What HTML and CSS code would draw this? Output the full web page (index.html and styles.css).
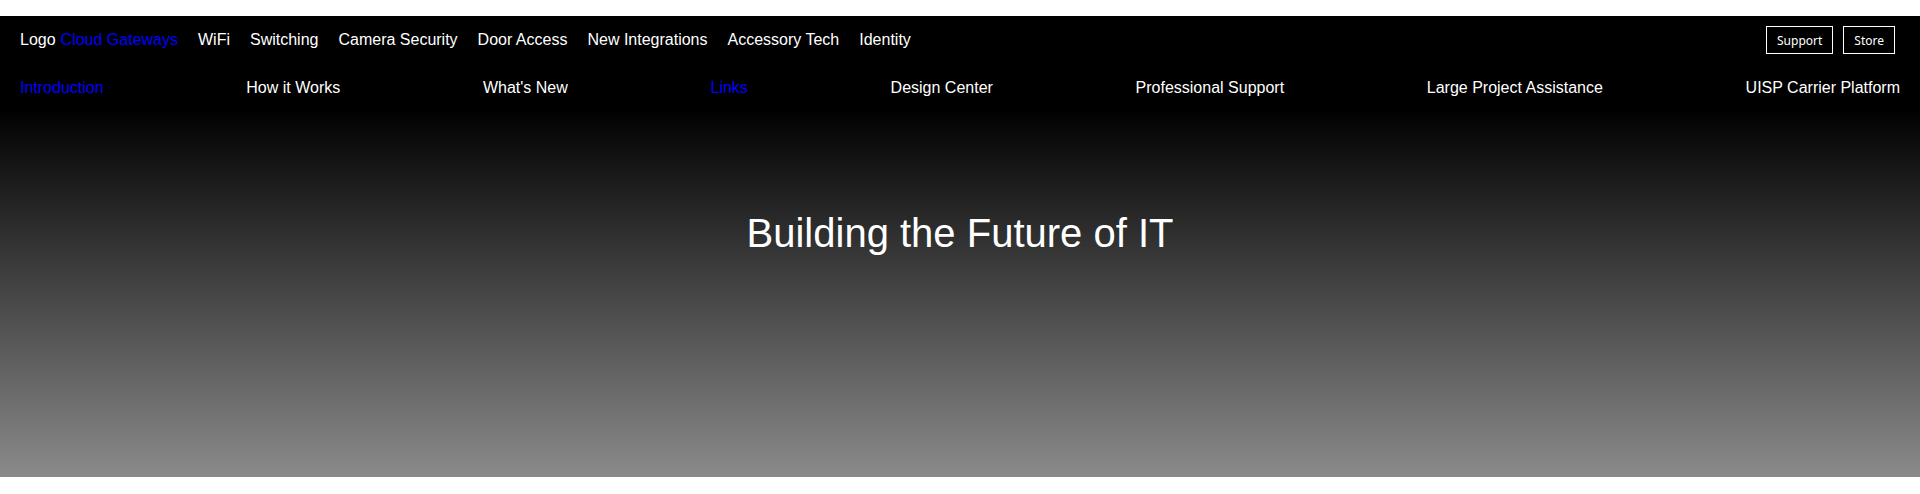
FILE: index.html
```html
<!DOCTYPE html>
<html lang="en">
<head>
<meta charset="utf-8">
<title>Building the Future of IT</title>
<link rel="stylesheet" href="styles.css">
</head>
<body>
<div class="page">
  <header class="site-header">
    <div class="top-row">
      <div class="brand">
        <span class="logo">Logo</span>
        <nav class="main-nav">
          <a class="nav-link active" href="#">Cloud Gateways</a>
          <a class="nav-link" href="#">WiFi</a>
          <a class="nav-link" href="#">Switching</a>
          <a class="nav-link" href="#">Camera Security</a>
          <a class="nav-link" href="#">Door Access</a>
          <a class="nav-link" href="#">New Integrations</a>
          <a class="nav-link" href="#">Accessory Tech</a>
          <a class="nav-link" href="#">Identity</a>
        </nav>
      </div>
      <div class="actions">
        <button class="btn" type="button">Support</button>
        <button class="btn" type="button">Store</button>
      </div>
    </div>
    <nav class="sub-nav">
      <a class="sub-link active" href="#">Introduction</a>
      <a class="sub-link" href="#">How it Works</a>
      <a class="sub-link" href="#">What's New</a>
      <a class="sub-link active" href="#">Links</a>
      <a class="sub-link" href="#">Design Center</a>
      <a class="sub-link" href="#">Professional Support</a>
      <a class="sub-link" href="#">Large Project Assistance</a>
      <a class="sub-link" href="#">UISP Carrier Platform</a>
    </nav>
  </header>
  <section class="hero">
    <h1 class="hero-title">Building the Future of IT</h1>
  </section>
</div>
</body>
</html>
```
FILE: styles.css
```css
html, body {
  margin: 0;
  padding: 0;
  background: #fff;
}

body {
  font-family: "Liberation Sans", Arial, sans-serif;
  font-size: 16px;
}

.page {
  padding: 16px 0;
}

.site-header {
  background: #000;
  padding: 10px 20px 12px;
}

.top-row {
  display: flex;
  align-items: center;
  justify-content: space-between;
  height: 28px;
  padding-right: 5px;
}

.brand {
  display: flex;
  align-items: center;
  gap: 5px;
}

.logo {
  color: #fff;
}

.main-nav {
  display: flex;
  gap: 20px;
}

.nav-link,
.sub-link {
  color: #fff;
  text-decoration: none;
  line-height: normal;
}

.nav-link.active,
.sub-link.active {
  color: #0000ff;
}

.actions {
  display: flex;
  gap: 10px;
}

.btn {
  font-family: "Noto Sans", "Open Sans", sans-serif;
  font-size: 12px;
  color: #fff;
  background: transparent;
  border: 1px solid #fff;
  padding: 0 10px 0 10px;
  height: 28px;
  min-width: 0;
  margin: 0;
}

.sub-nav {
  display: flex;
  justify-content: space-between;
  margin-top: 25px;
}

.hero {
  height: 368px;
  box-sizing: border-box;
  padding-top: 102px;
  background: linear-gradient(to bottom, #000 0%, #8a8a8a 100%);
}

.hero-title {
  margin: 0;
  text-align: center;
  color: #fff;
  font-weight: normal;
  font-size: 40px;
  line-height: normal;
}
```
